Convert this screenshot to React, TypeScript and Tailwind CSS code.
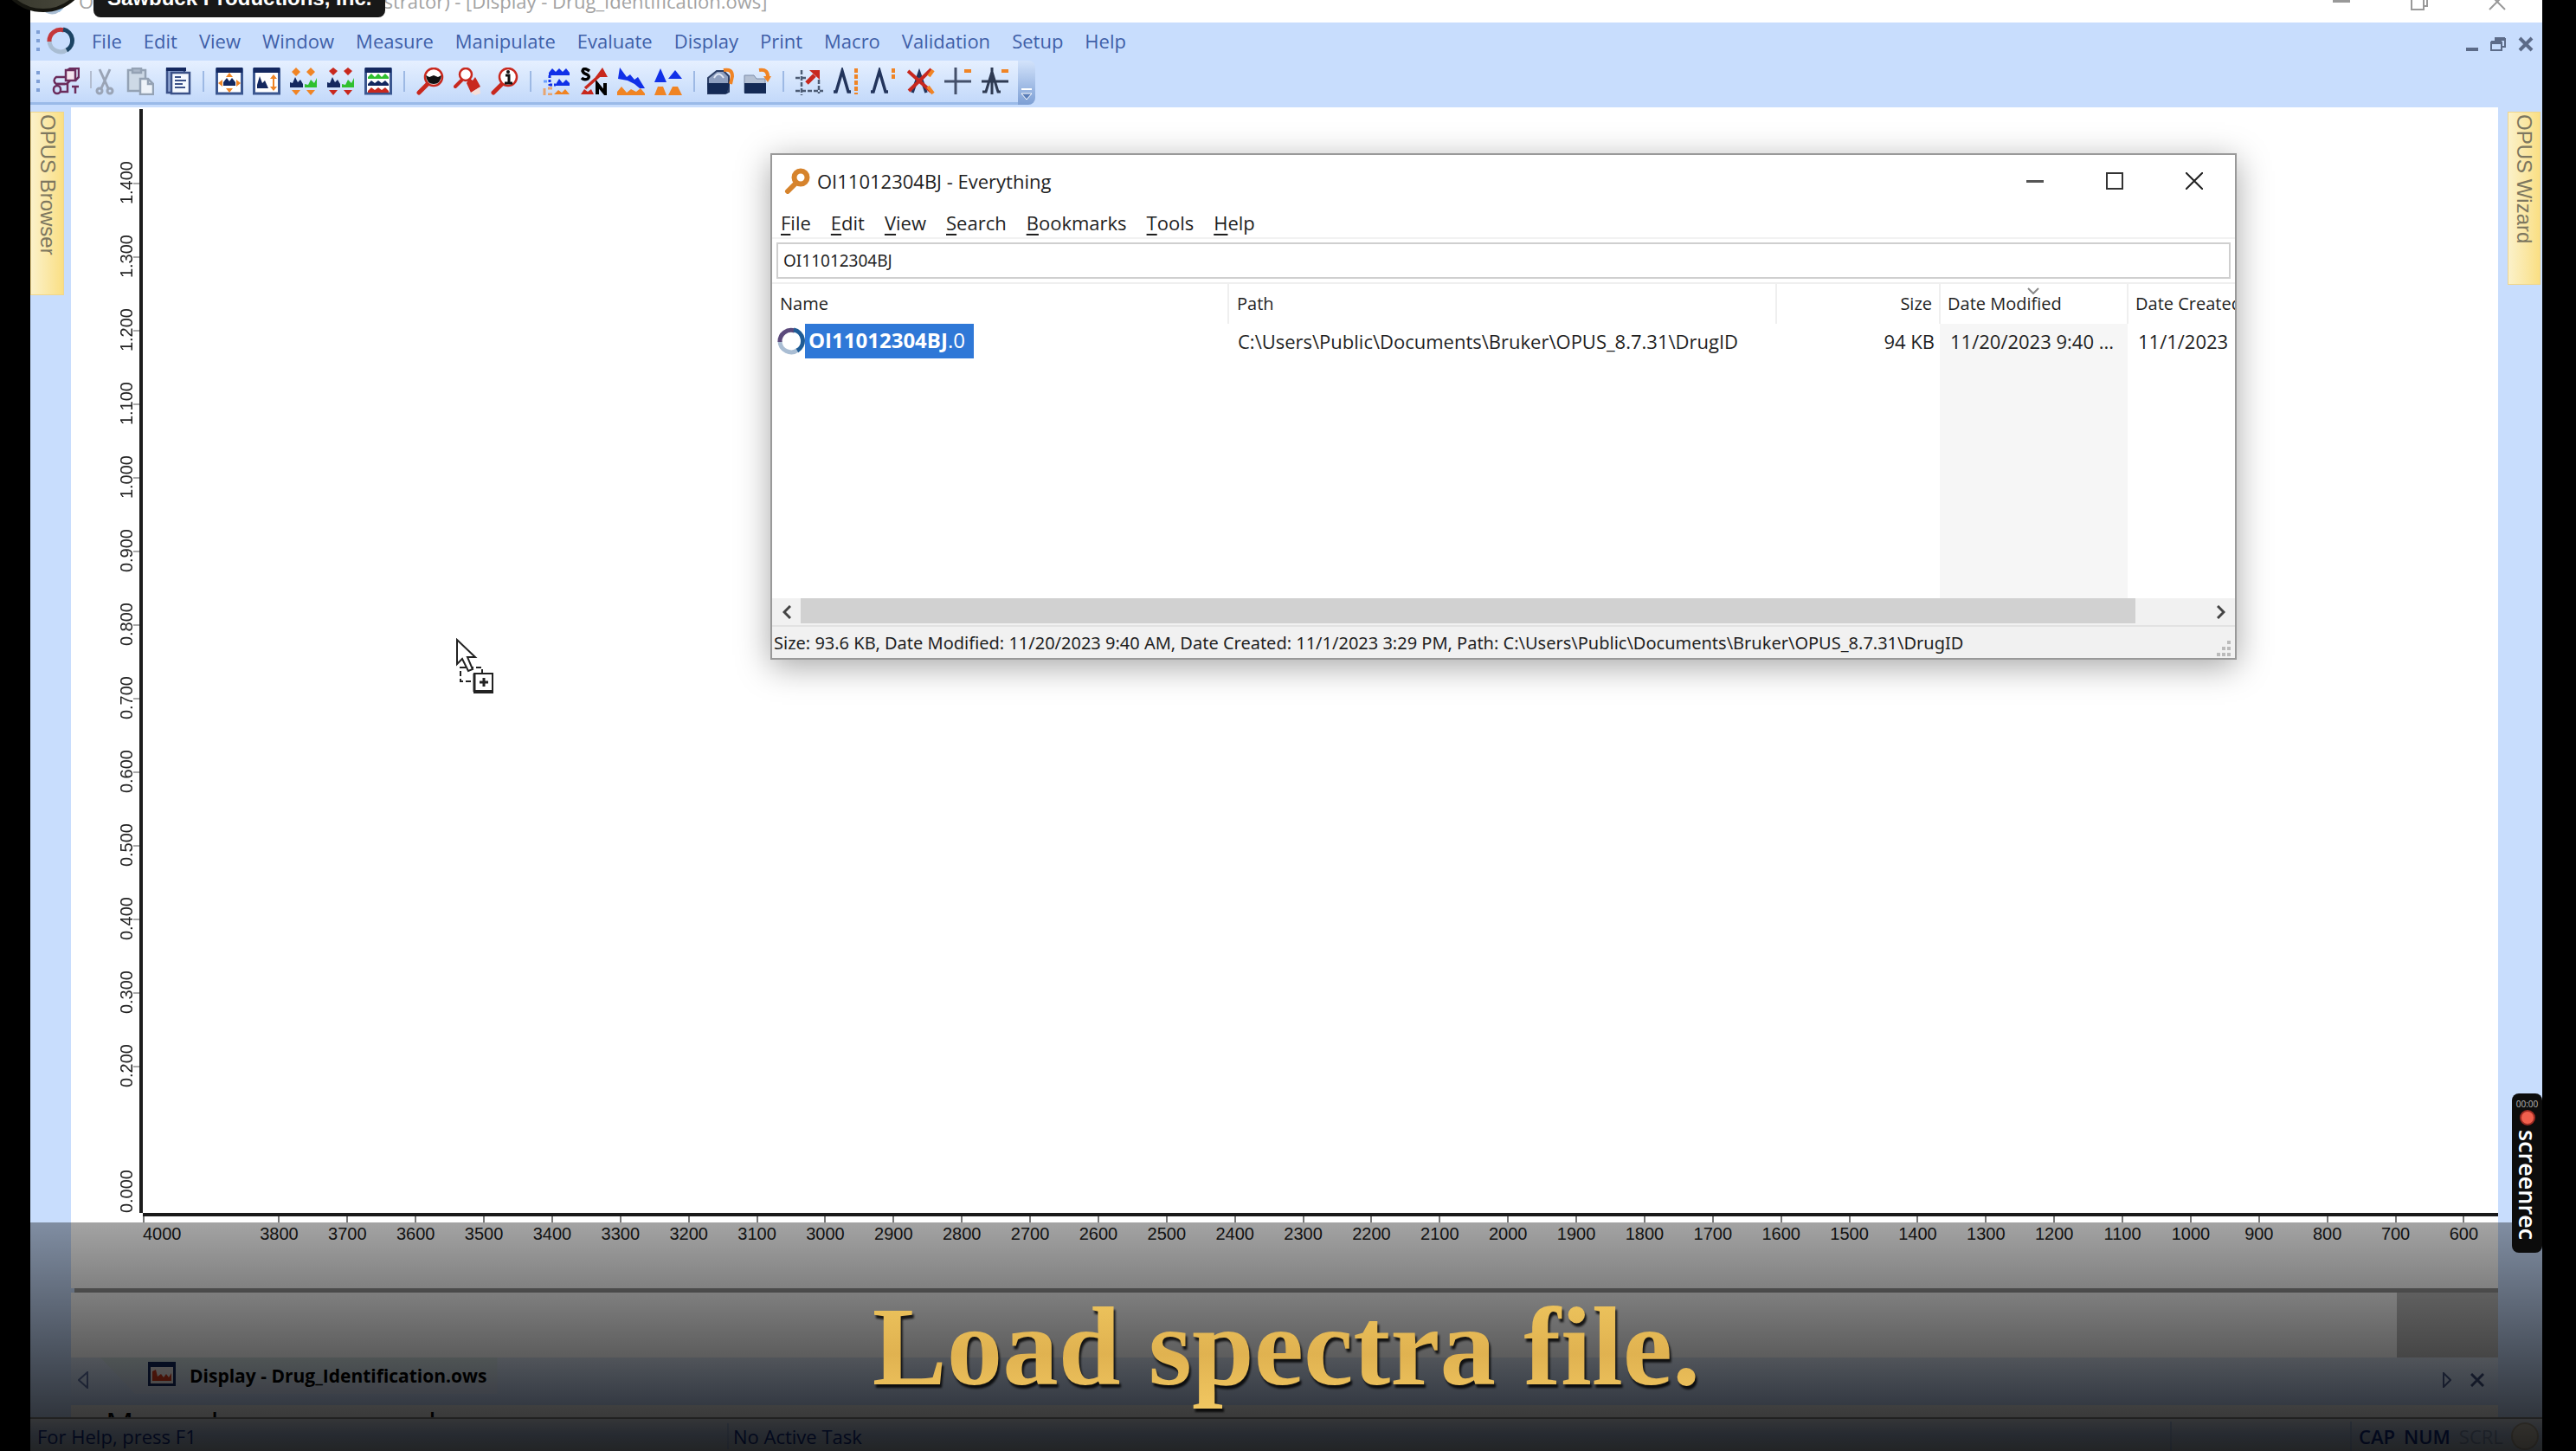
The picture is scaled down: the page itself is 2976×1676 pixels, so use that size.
import React from 'react';

type IconProps = { children: React.ReactNode; label: string };

const ToolButton: React.FC<IconProps> = ({ children, label }) => (
  <button type="button" aria-label={label} title={label} className="block h-8 w-8 shrink-0">
    <svg viewBox="0 0 32 32" className="h-8 w-8" fill="none">
      {children}
    </svg>
  </button>
);

const NAVY = '#14285f';
const ORANGE = '#f08424';
const BLUE = '#1030e8';
const RED = '#c8281e';
const GREEN = '#2fc02f';

const Frame = () => (
  <>
    <rect x="1.5" y="2" width="29" height="28" fill="#fff" stroke="#3b5790" strokeWidth="3" />
    <rect x="1" y="0" width="30" height="6" fill={NAVY} />
  </>
);

const peak = 'M0 12 V6 L3 7 L6 0 L9 6 L12 3 L15 8 V12 Z';

const groups: { label: string; icon: React.ReactNode }[][] = [
  [
    {
      label: 'Load File',
      icon: (
        <g stroke="#6b2c5c" strokeWidth="2.5">
          <rect x="16" y="3" width="11" height="12" fill="#f4e4ee" />
          <path d="M18 3 L21 1 H31 V11 L27 15" />
          <path d="M15 11 H5 Q0 15 5 19 H17 L21 15" />
          <rect x="2" y="21" width="8" height="9" rx="4" />
          <path d="M6 19 L15 19 M10 28 L18 28 V18" />
          <path d="M23 22 h8 M27 22 v8" />
        </g>
      ),
    },
    {
      label: 'Cut',
      icon: (
        <g stroke="#9aa4b6" strokeWidth="3">
          <path d="M2 4 V24" stroke="#b3bdd0" strokeWidth="2" />
          <path d="M12 2 L22 24 M24 2 L14 24" />
          <circle cx="12" cy="27" r="3" />
          <circle cx="24" cy="27" r="3" />
        </g>
      ),
    },
    {
      label: 'Copy',
      icon: (
        <g stroke="#94a2b4" strokeWidth="2.5">
          <path d="M2 3 H22 V27 H2 Z" fill="#cdd9e6" />
          <rect x="7" y="1" width="10" height="5" fill="#aab7c8" />
          <path d="M16 13 H25 L31 19 V31 H16 Z" fill="#eef3f9" />
          <path d="M25 13 V19 H31" />
        </g>
      ),
    },
    {
      label: 'Paste',
      icon: (
        <g stroke="#3b5188" strokeWidth="2.5">
          <path d="M4 2 H24 V29 H4 Z" fill="#8fa5d2" />
          <path d="M9 6 H30 V30 H9 Z" fill="#f5f9ff" />
          <path d="M13 11 h7 M13 15 h13 M13 19 h9 M13 23 h12" strokeWidth="2" />
          <path d="M3 2 H26" stroke={NAVY} strokeWidth="4" />
        </g>
      ),
    },
  ],
  [
    {
      label: 'Zoom All',
      icon: (
        <>
          <Frame />
          <path d="M9 21 V17 L13 12 L16 16 L19 12 L23 17 V21 Z" fill={NAVY} />
          <path d="M16 6 l4 5 h-8 Z M16 29 l4 -5 h-8 Z M3 18 l5 -4 v8 Z M29 18 l-5 -4 v8 Z" fill={ORANGE} />
        </>
      ),
    },
    {
      label: 'Scale All',
      icon: (
        <>
          <Frame />
          <path d="M5 24 V20 L8 10 L11 18 L14 15 L18 24 Z" fill={NAVY} />
          <path d="M24 8 l4 5 h-8 Z M24 27 l4 -5 h-8 Z M23 13 h2 v9 h-2 Z" fill={ORANGE} />
        </>
      ),
    },
    {
      label: 'Stack Shared',
      icon: (
        <>
          <path d="M7 0 l5 5 l-5 5 l-5 -5 Z M24 0 l5 5 l-5 5 l-5 -5 Z M7 32 l5 -6 h-10 Z M24 32 l5 -6 h-10 Z" fill={ORANGE} />
          <path d={peak} fill={NAVY} transform="translate(0 11)" />
          <path d="M17 23 V19 L21 20 L24 14 L28 18 L31 12 V23 Z" fill={GREEN} />
        </>
      ),
    },
    {
      label: 'Stack Single',
      icon: (
        <>
          <path d="M7 0 l5 4 l-5 5 l-5 -5 Z M24 0 l5 4 l-5 5 l-5 -5 Z M7 32 l5 -6 h-10 Z M24 32 l5 -6 h-10 Z" fill={RED} />
          <path d={peak} fill={NAVY} transform="translate(0 11)" />
          <path d="M17 23 V19 L21 20 L24 14 L28 18 L31 12 V23 Z" fill={GREEN} />
        </>
      ),
    },
    {
      label: 'Waterfall',
      icon: (
        <>
          <Frame />
          <path d="M4 13 V11 l4 -4 l4 4 l4 -4 l4 4 l4 -4 l4 4 V13 Z" fill={GREEN} />
          <path d="M4 21 V19 l4 -4 l4 3 l4 -3 l4 3 l4 -3 l4 4 V21 Z" fill={NAVY} />
          <path d="M4 29 V27 l4 -4 l4 3 l4 -3 l4 3 l4 -3 l4 4 V29 Z" fill={RED} />
        </>
      ),
    },
  ],
  [
    {
      label: 'Zoom',
      icon: (
        <>
          <path d="M3 29 L14 18" stroke={RED} strokeWidth="5" strokeLinecap="round" />
          <circle cx="20" cy="11" r="10" fill="#fff" stroke={RED} strokeWidth="2.5" />
          <path d="M11 9 L15 11 L20 9 L25 11 L29 9 Q28 19 20 19 Q12 19 11 9 Z" fill="#111" />
        </>
      ),
    },
    {
      label: 'Pan',
      icon: (
        <>
          <path d="M2 22 L9 15" stroke={RED} strokeWidth="4" strokeLinecap="round" />
          <circle cx="14" cy="8" r="7" fill="#fff" stroke={RED} strokeWidth="2.5" />
          <path d="M15 18 L18 12 L22 15 L25 11 L31 22 L20 29 Z" fill={RED} />
          <path d="M20 29 L30 23 L31 30 L25 32 Z" fill="#f6ded8" />
        </>
      ),
    },
    {
      label: 'Peak Info',
      icon: (
        <>
          <path d="M3 29 L14 18" stroke={RED} strokeWidth="5" strokeLinecap="round" />
          <circle cx="20" cy="11" r="10" fill="#fff" stroke={RED} strokeWidth="2.5" />
          <path d="M17 9 H21 V17 M16 18 H25" stroke="#111" strokeWidth="3" />
          <circle cx="20" cy="5" r="2" fill="#111" />
        </>
      ),
    },
  ],
  [
    {
      label: 'Peak Picking',
      icon: (
        <>
          <path d="M7 9 V6 l4 -5 l4 4 l4 -4 l4 4 l4 -4 l4 5 V9 Z M14 21 l5 -8 l4 5 l4 -4 l4 4 V21 Z" fill={BLUE} />
          <path d="M8 9 V21 M8 20 H15" stroke={BLUE} strokeWidth="3" strokeDasharray="3 2" />
          <path d="M1 16 h4" stroke="#6aa0ff" strokeWidth="3" />
          <path d="M2 24 v8 M6 24 h5 M6 31 h5" stroke="#e7a571" strokeWidth="3" />
          <path d="M13 31 l5 -5 l4 3 l4 -4 l5 6 Z" fill={ORANGE} />
        </>
      ),
    },
    {
      label: 'Signal to Noise',
      icon: (
        <>
          <path d="M11 4 Q4 -1 3 4 Q4 7 8 8 Q12 10 9 13 Q5 15 2 12" stroke="#000" strokeWidth="3.5" />
          <path d="M20 31 V19 L29 30 V18" stroke="#000" strokeWidth="4" />
          <path d="M6 24 L24 8" stroke={RED} strokeWidth="3.5" />
          <path d="M18 11 L26 0 L32 11 Z M1 31 l4 -6 l4 3 l4 -3 l3 6 Z" fill={RED} />
        </>
      ),
    },
    {
      label: 'Baseline Correction',
      icon: (
        <>
          <path d="M1 13 L3 0 L11 11 L15 8 L20 14 L24 11 L32 24 H26 L20 19 L12 15 Z" fill={BLUE} />
          <path d="M0 32 V28 L5 22 L11 29 L16 25 L22 28 L27 24 L32 30 V32 Z" fill={ORANGE} />
        </>
      ),
    },
    {
      label: 'Normalization',
      icon: (
        <>
          <path d="M0 17 L7 1 L14 17 Z M16 13 L24 3 L32 13 Z" fill={BLUE} />
          <path d="M0 32 L4 22 H10 L14 32 Z M16 32 L21 22 H27 L32 32 Z" fill={ORANGE} />
        </>
      ),
    },
  ],
  [
    {
      label: 'Load Multiple',
      icon: (
        <>
          <path d="M2 12 L12 4 H20 L26 10 V28 L22 30 H2 Z" fill="#8fa0c0" stroke="#2c3f66" strokeWidth="2" />
          <path d="M9 12 Q14 3 20 12" stroke="#dfe7f5" strokeWidth="2" />
          <path d="M1 18 H27 L24 30 H2 Z" fill="#142a55" />
          <path d="M20 3 Q30 1 30 10 L28 19" stroke={ORANGE} strokeWidth="4" />
        </>
      ),
    },
    {
      label: 'Open Folder',
      icon: (
        <>
          <path d="M1 9 H12 L15 13 H25 V29 H1 Z" fill="#b5c1d4" stroke="#7d8ca8" strokeWidth="1" />
          <path d="M1 18 H26 V30 H1 Z" fill="#142a55" />
          <path d="M18 3 Q29 1 28 13" stroke={ORANGE} strokeWidth="4" />
          <path d="M23 10 H32 L28 17 Z" fill={ORANGE} />
        </>
      ),
    },
  ],
  [
    {
      label: 'Crosshair Region',
      icon: (
        <>
          <path d="M7 3 V32 M0 12 H12 M0 27 H32 M27 14 V30" stroke="#4c5b74" strokeWidth="2.5" strokeDasharray="5 2" />
          <path d="M13 18 L22 9" stroke={RED} strokeWidth="5" />
          <path d="M16 3 H28 V14 Z" fill={RED} />
        </>
      ),
    },
    {
      label: 'Shift Peak',
      icon: (
        <>
          <path d="M1 28 H4 L11 4 L18 28 H21" stroke="#22345c" strokeWidth="3.5" />
          <path d="M27 1 V31" stroke={ORANGE} strokeWidth="4" strokeDasharray="5 2" />
        </>
      ),
    },
    {
      label: 'Raise Peak',
      icon: (
        <>
          <path d="M1 28 H4 L11 4 L18 28 H21" stroke="#22345c" strokeWidth="3.5" />
          <path d="M27 1 V15" stroke={ORANGE} strokeWidth="4" strokeDasharray="5 2" />
        </>
      ),
    },
    {
      label: 'Remove Peak',
      icon: (
        <>
          <path d="M6 29 L14 6 L22 29" stroke="#22345c" strokeWidth="3.5" />
          <path d="M1 4 L28 28 M28 2 L2 27" stroke={RED} strokeWidth="4" />
          <path d="M30 3 L25 10 M24 22 L30 30" stroke={ORANGE} strokeWidth="4" />
        </>
      ),
    },
    {
      label: 'Crosshair Cursor',
      icon: (
        <>
          <path d="M13 0 V31 M0 16 H31" stroke="#44506a" strokeWidth="3" />
          <path d="M23 4 H31" stroke={ORANGE} strokeWidth="4" />
        </>
      ),
    },
    {
      label: 'Curve Cursor',
      icon: (
        <>
          <path d="M1 28 H5 L12 5 L19 28 H22 M0 16 H31 M12 0 V31" stroke="#2e3a52" strokeWidth="3" />
          <path d="M23 4 H31" stroke={ORANGE} strokeWidth="4" />
        </>
      ),
    },
  ],
];

const mainMenu = ['File', 'Edit', 'View', 'Window', 'Measure', 'Manipulate', 'Evaluate', 'Display', 'Print', 'Macro', 'Validation', 'Setup', 'Help'];
const searchMenu = ['File', 'Edit', 'View', 'Search', 'Bookmarks', 'Tools', 'Help'];

// 1.400 down to 0.200, then 0.000 sits on the corner
const yTicks = Array.from({ length: 13 }, (_, i) => (1.4 - i * 0.1).toFixed(3));
const xTicks = Array.from({ length: 33 }, (_, i) => 3800 - i * 100);

const OpusLogo = ({ className, first, second }: { className: string; first: string; second: string }) => (
  <svg viewBox="0 0 32 32" className={className} fill="none" strokeWidth="5">
    <path d="M24 26 A13 13 0 0 1 3 16" stroke="#a9bdd3" />
    <path d="M3 17 A13 13 0 0 1 20 4" stroke={first} />
    <path d="M19 3 A13 13 0 0 1 23 27" stroke={second} />
  </svg>
);

const Grip = () => (
  <div className="flex w-2 flex-col gap-[6px]" aria-hidden="true">
    <span className="h-[4px] w-[4px] bg-[#7f9fd6]" />
    <span className="h-[4px] w-[4px] bg-[#7f9fd6]" />
    <span className="h-[4px] w-[4px] bg-[#7f9fd6]" />
  </div>
);

const TitleBar = () => (
  <header className="relative h-[26px] shrink-0 overflow-hidden bg-white">
    <div className="flex h-full items-start justify-between pl-[9px] pr-[42px]">
      <div className="flex -translate-y-4 items-center gap-3">
        <OpusLogo className="h-8 w-8" first="#9cc0e2" second="#9cc0e2" />
        <span className="whitespace-nowrap pl-[3px] text-[22px] leading-[34px] text-[#a3a3a3]">
          OPUS - Operator: Defaults (Administrator) - [Display - Drug_Identification.ows]
        </span>
      </div>
      <div className="flex -translate-y-2 items-start gap-[70px] text-[#999]">
        <button type="button" aria-label="Minimize" className="mt-2 h-[3px] w-5 bg-[#999]" />
        <button type="button" aria-label="Restore">
          <svg viewBox="0 0 20 20" className="h-5 w-5" fill="none" stroke="currentColor" strokeWidth="2">
            <path d="M1 4 H15 V19 H1 Z M5 3 V1 H19 V15 H16" />
          </svg>
        </button>
        <button type="button" aria-label="Close">
          <svg viewBox="0 0 20 20" className="h-5 w-5" stroke="currentColor" strokeWidth="2">
            <path d="M1 1 L19 19 M19 1 L1 19" />
          </svg>
        </button>
      </div>
    </div>
  </header>
);

const MenuBar = () => (
  <nav className="flex h-[44px] shrink-0 items-center bg-[#c8ddfd] pb-[3px] pl-[7px] pr-[10px]">
    <Grip />
    <OpusLogo className="ml-1 mr-5 h-8 w-8" first="#c4373b" second="#1c4464" />
    <div className="flex flex-1 gap-[25px] text-[22px] leading-[30px] text-[#3f5fa8]">
      {mainMenu.map((item) => (
        <button type="button" key={item}>{item}</button>
      ))}
    </div>
    <div className="flex items-center gap-[14px] pt-2 text-[#5c6b88]">
      <button type="button" aria-label="Minimize child window" className="mt-3 h-1 w-[14px] bg-[#5c6b88]" />
      <button type="button" aria-label="Restore child window">
        <svg viewBox="0 0 18 16" className="h-4 w-[18px]" fill="none" stroke="currentColor" strokeWidth="2">
          <path d="M1 6 H13 V15 H1 Z M5 2 H17 V11 H14" />
          <path d="M1 6 H13 M5 2 H17" strokeWidth="4" />
        </svg>
      </button>
      <button type="button" aria-label="Close child window">
        <svg viewBox="0 0 18 18" className="h-[18px] w-[18px]" stroke="currentColor" strokeWidth="4">
          <path d="M2 2 L16 16 M16 2 L2 16" />
        </svg>
      </button>
    </div>
  </nav>
);

const ToolBar = () => (
  <div className="flex h-[54px] shrink-0 bg-[#c8ddfd] pb-[3px]">
    <div className="flex items-center border-b-[3px] border-[#9abae8] bg-gradient-to-b from-[#e6f0ff] to-[#c3d9fa] pl-[7px] pr-[10px]">
      <Grip />
      <div className="ml-[10px] flex items-center">
        {groups.map((group, g) => (
          <React.Fragment key={g}>
            {g > 0 && <span className="mx-[13px] h-6 w-[2px] bg-[#9db9e4]" />}
            <div className="flex gap-[11px]">
              {group.map((tool) => (
                <ToolButton key={tool.label} label={tool.label}>{tool.icon}</ToolButton>
              ))}
            </div>
          </React.Fragment>
        ))}
      </div>
    </div>
    <button type="button" aria-label="Toolbar options" className="flex w-5 items-end justify-center rounded-r-lg bg-gradient-to-b from-[#d3e3fb] to-[#7d9fd4] pb-1">
      <svg viewBox="0 0 14 16" className="h-4 w-[14px]">
        <path d="M1 2 H13" stroke="#fff" strokeWidth="2" />
        <path d="M1 7 H13 L7 14 Z" fill="#5a7db8" stroke="#fff" strokeWidth="1" />
      </svg>
    </button>
  </div>
);

const SideTab = ({ label, className }: { label: string; className: string }) => (
  <button
    type="button"
    className={`flex items-start justify-center border border-[#f0d68c] bg-gradient-to-r from-[#fbf1c9] to-[#fadf83] pt-[2px] text-[24px] leading-[38px] text-[#7d775f] [font-family:'Liberation_Sans',sans-serif] ${className}`}
  >
    <span className="[writing-mode:vertical-rl]">{label}</span>
  </button>
);

const SpectrumChart = () => (
  <section className="flex flex-1 flex-col bg-white [font-family:'Liberation_Sans',sans-serif]" aria-label="Spectrum">
    <div className="flex flex-1">
      <div className="flex w-[79px] flex-col pt-[45px] text-[20px] leading-6 text-[#222]">
        {yTicks.map((tick) => (
          <div key={tick} className="flex h-[85px] items-center justify-end">
            <span className="rotate-180 [writing-mode:vertical-rl]">{tick}</span>
            <span className="ml-[-4px] h-[2px] w-[7px] bg-[#aaa]" />
          </div>
        ))}
        <div className="flex flex-1 items-end justify-end pr-[3px]">
          <span className="rotate-180 [writing-mode:vertical-rl]">0.000</span>
        </div>
      </div>
      <div className="mt-[2px] flex-1 border-l-4 border-[#1c1c1c]" />
    </div>
    <div className="ml-[83px] h-1 bg-[#1a1a1a]" />
    <div className="ml-[83px] flex h-[83px] text-[20px] leading-6 text-[#1c1c1c]">
      <div className="w-[118px]">
        <span className="block h-[7px] w-[2px] bg-[#777]" />
        <span className="mt-px block">4000</span>
      </div>
      {xTicks.map((tick) => (
        <div key={tick} className="flex flex-1 flex-col items-center">
          <span className="block h-[7px] w-[2px] bg-[#777]" />
          <span className="mt-px block">{tick}</span>
        </div>
      ))}
    </div>
  </section>
);

const DocumentTabs = () => (
  <div className="flex h-[55px] shrink-0 items-start justify-between bg-gradient-to-b from-[#e0e9f8] to-[#c4dafc] pr-[16px]">
    <div className="flex items-start">
      <button type="button" aria-label="Scroll tabs left" className="ml-2 mt-4">
        <svg viewBox="0 0 12 20" className="h-5 w-3" fill="none" stroke="#6074a8" strokeWidth="2">
          <path d="M11 1 V19 L1 10 Z" />
        </svg>
      </button>
      <button
        type="button"
        className="ml-[14px] flex h-[42px] items-center gap-4 bg-gradient-to-b from-[#d9e8e8] to-[#d5e0f8] pl-[55px] pr-3 text-[21px] font-bold leading-[30px] text-black [clip-path:polygon(0_0,100%_0,100%_100%,40px_100%)]"
      >
        <svg viewBox="0 0 32 28" className="mb-1 h-7 w-8">
          <rect x="1.5" y="1.5" width="29" height="25" fill="#f4efef" stroke={NAVY} strokeWidth="3" />
          <path d="M1 0 H31 V6 H1 Z" fill={NAVY} />
          <path d="M5 22 V11 L9 9 L11 17 L15 14 L18 18 L21 14 L24 18 L27 13 V22 Z" fill="#d83c1c" />
        </svg>
        Display - Drug_Identification.ows
      </button>
    </div>
    <div className="flex items-center gap-[22px] pt-[17px]">
      <button type="button" aria-label="Scroll tabs right">
        <svg viewBox="0 0 10 18" className="h-[18px] w-[10px]" fill="none" stroke="#4b5d90" strokeWidth="2">
          <path d="M1 1 V17 L9 9 Z" />
        </svg>
      </button>
      <button type="button" aria-label="Close tab">
        <svg viewBox="0 0 16 16" className="h-4 w-4" stroke="#3f5080" strokeWidth="3">
          <path d="M1 1 L15 15 M15 1 L1 15" />
        </svg>
      </button>
    </div>
  </div>
);

const StatusBar = () => (
  <footer className="flex h-[39px] shrink-0 items-center border-t-2 border-[#8a8a8a] bg-gradient-to-b from-[#dde2ea] via-[#bccff0] to-[#c9d4dc] pt-[2px] text-[22px] leading-[30px] text-[#0d2d8c]">
    <span className="w-[807px] border-r-2 border-[#a9bfe4] pl-2">For Help, press F1</span>
    <span className="flex-1 pl-[5px]">No Active Task</span>
    <span className="h-[34px] w-[210px] border-x-2 border-[#a9bfe4]" />
    <span className="flex w-[184px] gap-[10px] pl-2 font-semibold">
      <span>CAP</span>
      <span>NUM</span>
      <span className="font-normal text-[#8a9dbd]">SCRL</span>
    </span>
    <span className="mr-1 h-8 w-8 rounded-full border-2 border-[#b5ab98] bg-[#d8d0c0]" />
  </footer>
);

const SearchWindow = () => (
  <section
    aria-label="Everything"
    className="absolute left-[855px] top-[177px] flex h-[585px] w-[1694px] flex-col border-2 border-[#999] bg-white text-[22px] text-[#1f1f1f] shadow-[0_8px_36px_rgba(0,0,0,0.35)]"
  >
    <div className="flex h-[60px] shrink-0 items-center justify-between pl-[14px] pr-[37px]">
      <div className="flex items-center gap-2">
        <svg viewBox="0 0 30 30" className="h-[30px] w-[30px]" fill="none" stroke="#d6832c">
          <circle cx="19" cy="11" r="7.5" strokeWidth="6" />
          <path d="M13 18 L4 27" strokeWidth="6" strokeLinecap="round" />
        </svg>
        <h1>OI11012304BJ - Everything</h1>
      </div>
      <div className="flex items-center gap-[72px] text-[#222]">
        <button type="button" aria-label="Minimize Everything" className="h-[3px] w-5 bg-[#555]" />
        <button type="button" aria-label="Maximize Everything" className="h-5 w-5 border-2 border-[#333]" />
        <button type="button" aria-label="Close Everything">
          <svg viewBox="0 0 20 20" className="h-5 w-5" stroke="currentColor" strokeWidth="2">
            <path d="M0 0 L20 20 M20 0 L0 20" />
          </svg>
        </button>
      </div>
    </div>
    <nav className="flex h-[37px] shrink-0 items-center gap-[23px] border-b-2 border-[#f2f2f2] pl-[10px] leading-[30px]">
      {searchMenu.map((item) => (
        <button type="button" key={item}>
          <span className="underline underline-offset-4">{item[0]}</span>
          {item.slice(1)}
        </button>
      ))}
    </nav>
    <div className="border-b-2 border-[#efefef] px-[5px] pb-1 pt-1">
      <input
        aria-label="Search"
        defaultValue="OI11012304BJ"
        className="block h-[42px] w-full border-2 border-[#cfcfcf] px-[6px] text-[19px] [font-family:'Noto_Sans',sans-serif]"
      />
    </div>
    <div className="flex-1 overflow-hidden bg-[linear-gradient(#f6f6f6,#f6f6f6)] bg-[length:217px_100%] bg-[position:1349px_46px] bg-no-repeat">
      <table className="w-full table-fixed border-collapse whitespace-nowrap text-left">
        <colgroup>
          <col className="w-[527px]" />
          <col className="w-[633px]" />
          <col className="w-[189px]" />
          <col className="w-[217px]" />
          <col />
        </colgroup>
        <thead className="text-[20px]">
          <tr className="h-[46px] bg-white">
            <th className="border-r-2 border-[#efefef] pl-[9px] font-normal">Name</th>
            <th className="border-r-2 border-[#efefef] pl-[9px] font-normal">Path</th>
            <th className="border-r-2 border-[#efefef] pr-2 text-right font-normal">Size</th>
            <th className="relative border-r-2 border-[#efefef] pl-2 font-normal" aria-sort="descending">
              <svg viewBox="0 0 14 8" className="absolute left-[100px] top-1 h-2 w-[14px]" fill="none" stroke="#888" strokeWidth="2">
                <path d="M1 1 L7 7 L13 1" />
              </svg>
              Date Modified
            </th>
            <th className="overflow-hidden pl-2 font-normal">Date Created</th>
          </tr>
        </thead>
        <tbody>
          <tr className="h-[40px]">
            <td className="pl-[6px]">
              <div className="flex items-center">
                <OpusLogo className="h-8 w-8" first="#5c4a7c" second="#1f5c96" />
                <span className="h-10 bg-[#2f78d7] pl-1 pr-[10px] text-[24px] leading-[38px] text-white">
                  <b>OI11012304BJ</b>.0
                </span>
              </div>
            </td>
            <td className="pl-[11px]">C:\Users\Public\Documents\Bruker\OPUS_8.7.31\DrugID</td>
            <td className="pr-[6px] text-right">94 KB</td>
            <td className="pl-3">11/20/2023 9:40 ...</td>
            <td className="overflow-hidden pl-3">11/1/2023</td>
          </tr>
        </tbody>
      </table>
    </div>
    <div className="flex h-[31px] shrink-0 items-stretch bg-[#f1f1f1] text-[#444]">
      <button type="button" aria-label="Scroll left" className="flex w-[33px] items-center justify-center">
        <svg viewBox="0 0 10 16" className="h-4 w-[10px]" fill="none" stroke="currentColor" strokeWidth="3">
          <path d="M9 1 L2 8 L9 15" />
        </svg>
      </button>
      <div className="mb-[2px] flex-1 bg-[#d1d1d1]" />
      <div className="w-[82px]" />
      <button type="button" aria-label="Scroll right" className="flex w-[33px] items-center justify-center">
        <svg viewBox="0 0 10 16" className="h-4 w-[10px]" fill="none" stroke="currentColor" strokeWidth="3">
          <path d="M1 1 L8 8 L1 15" />
        </svg>
      </button>
    </div>
    <div className="flex h-[38px] shrink-0 items-center justify-between border-t-2 border-[#e2e2e2] bg-[#f1f1f1] pl-[2px] pr-1 pt-[2px] text-[20px] leading-[28px] [font-family:'Noto_Sans',sans-serif]">
      <span className="whitespace-nowrap">
        Size: 93.6 KB, Date Modified: 11/20/2023 9:40 AM, Date Created: 11/1/2023 3:29 PM, Path: C:\Users\Public\Documents\Bruker\OPUS_8.7.31\DrugID
      </span>
      <svg viewBox="0 0 18 18" className="mt-3 h-[18px] w-[18px]" fill="#bbb">
        <path d="M13 0 h4 v4 h-4 Z M7 7 h4 v4 h-4 Z M13 7 h4 v4 h-4 Z M1 14 h4 v4 h-4 Z M7 14 h4 v4 h-4 Z M13 14 h4 v4 h-4 Z" />
      </svg>
    </div>
  </section>
);

const DragCursor = () => (
  <svg viewBox="0 0 46 66" className="absolute left-[491px] top-[737px] h-[66px] w-[46px]" fill="#fff" stroke="#222" strokeWidth="2">
    <path d="M6 34 H31 V50 H6 Z" strokeDasharray="6 3" />
    <path d="M2 2 V30 L8 24 L15 38 L20 36 L14 22 H23 Z" />
    <rect x="22" y="41" width="21" height="21" />
    <path d="M21 62 H44" strokeWidth="4" />
    <path d="M22 41 V62" strokeWidth="3" />
    <path d="M33 46 V56 M28 51 H38" strokeWidth="3" />
  </svg>
);

const Caption = () => (
  <div className="pointer-events-none absolute inset-x-0 bottom-0 flex h-[264px] justify-center bg-gradient-to-b from-black/36 to-black/83 pt-[72px]">
    <p className="h-[160px] whitespace-nowrap bg-gradient-to-b from-[#f0c860] via-[#e0b250] to-[#f6cd66] bg-clip-text text-[129px] font-bold leading-[144px] text-transparent drop-shadow-[2px_4px_1px_rgba(0,0,0,0.8)] [font-family:'Liberation_Serif',serif]">
      Load spectra file.
    </p>
  </div>
);

const RecorderBadge = () => (
  <div className="absolute bottom-[229px] right-0 flex h-[184px] w-[35px] flex-col items-center rounded-lg bg-[#0c0c0c] pt-[5px] text-white [font-family:'Open_Sans',sans-serif]">
    <span className="text-[10px] leading-[14px] text-[#bbb]">00:00</span>
    <span className="h-[18px] w-[18px] rounded-full border-2 border-[#a02c24] bg-[#f0604e]" />
    <span className="mt-[5px] text-[27px] font-semibold leading-[34px] [writing-mode:vertical-rl]">screenrec</span>
  </div>
);

const ChannelOverlay = () => (
  <>
    <div className="absolute left-[-4px] top-[-94px] h-[108px] w-[108px] rounded-full border-4 border-[#15150f] bg-gradient-to-r from-[#35352b] to-[#4b4b3e]" />
    <div className="absolute left-[108px] top-0 h-5 overflow-hidden rounded-b-lg bg-[#181818] px-4 text-[24px] font-bold text-white [font-family:'Liberation_Sans',sans-serif]">
      <span className="-mt-4 block whitespace-nowrap leading-[28px]">Sawbuck Productions, Inc.</span>
    </div>
  </>
);

export default function App() {
  return (
    <div className="relative flex h-screen min-h-[1200px] overflow-hidden bg-black pl-[35px] pr-[39px] [font-family:'Open_Sans',sans-serif]">
      <main className="relative flex min-w-0 flex-1 flex-col bg-[#c8ddfd]">
        <TitleBar />
        <MenuBar />
        <ToolBar />
        <div className="flex min-h-0 flex-1">
          <aside className="w-[47px] pt-[5px]">
            <SideTab label="OPUS Browser" className="h-[212px] w-[39px]" />
          </aside>
          <div className="flex min-w-0 flex-1 flex-col">
            <SpectrumChart />
            <div className="ml-1 h-[5px] bg-[#959595]" />
            <div className="flex h-[75px] shrink-0">
              <div className="flex-1 bg-white" />
              <div className="w-[117px] bg-[#c0c0c0]" />
            </div>
            <DocumentTabs />
            <div className="h-[14px] shrink-0 overflow-hidden bg-[#f0f0f0] pl-10 text-[36px] leading-[44px] text-black">
              Move along curve mode
            </div>
          </div>
          <aside className="flex w-[51px] justify-end pr-[2px] pt-[5px]">
            <SideTab label="OPUS Wizard" className="h-[200px] w-[38px]" />
          </aside>
        </div>
        <StatusBar />
        <DragCursor />
        <SearchWindow />
        <Caption />
        <RecorderBadge />
      </main>
      <ChannelOverlay />
    </div>
  );
}
